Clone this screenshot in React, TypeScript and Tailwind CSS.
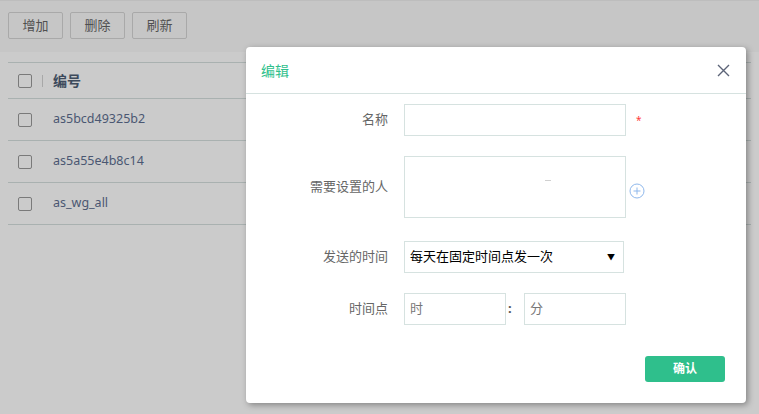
import React from 'react';

const rows = ['as5bcd49325b2', 'as5a55e4b8c14', 'as_wg_all'];

function Checkbox() {
  return <span className="block h-[14px] w-[14px] rounded-[2px] border border-[#7a7a7a]" />;
}

export default function App() {
  return (
    <div
      className="relative h-[414px] w-[759px] overflow-hidden bg-[#cbcbcb]"
      style={{ fontFamily: '"Noto Sans", "Noto Sans CJK SC", sans-serif' }}
    >
      <div className="flex h-[52px] gap-[7px] border-t border-[#bdbdbd] bg-[#c6c6c6] pl-2 pt-[11px]">
        {['增加', '删除', '刷新'].map((b) => (
          <button
            key={b}
            type="button"
            className="flex h-[27px] w-[55px] items-center justify-center rounded-[2px] border border-[#a9a9a9] text-[13px] text-[#505050]"
          >
            {b}
          </button>
        ))}
      </div>

      <div className="mx-2 mt-[10px] border-t border-[#a9b1b0]">
        <div className="flex h-[36px] items-center border-b border-[#a9b1b0] pl-[10px]">
          <Checkbox />
          <span className="ml-[10px] h-[12px] w-px bg-[#a8a8a8]" />
          <span className="ml-[10px] text-[14px] font-bold text-[#3d4a5c]">编号</span>
        </div>
        {rows.map((r) => (
          <div key={r} className="flex h-[42px] items-center border-b border-[#a9b1b0] pl-[10px]">
            <Checkbox />
            <span className="ml-[21px] text-[12.5px] text-[#4a5772]">{r}</span>
          </div>
        ))}
      </div>

      <div className="absolute left-[246px] top-[47px] flex h-[356px] w-[500px] flex-col rounded-[4px] bg-white shadow-[2px_2px_6px_rgba(0,0,0,0.35)]">
        <div className="flex h-[47px] items-center justify-between border-b border-[#d6e2e0] pl-[15px] pr-[16px]">
          <span className="text-[14px] text-[#2fbf8c]">编辑</span>
          <svg width="13" height="13" viewBox="0 0 13 13" className="text-[#5c6478]">
            <path d="M1 1L12 12M12 1L1 12" stroke="currentColor" strokeWidth="1.4" />
          </svg>
        </div>

        <div className="flex flex-col pt-[10px] text-[13px]">
          <div className="flex items-center">
            <label className="w-[142px] text-right text-[#666]">名称</label>
            <input className="ml-4 h-[32px] w-[222px] border border-[#d6e2e0] outline-none" />
            <span className="ml-[10px] text-[10px] text-[#ff3b3b]">*</span>
          </div>

          <div className="mt-[20px] flex items-center">
            <label className="w-[142px] text-right text-[#666]">需要设置的人</label>
            <div className="relative ml-4 h-[62px] w-[222px] border border-[#d6e2e0]">
              <span className="absolute left-[140px] top-[23px] h-px w-[6px] bg-[#d0d0d0]" />
            </div>
            <svg width="16" height="16" viewBox="0 0 16 16" className="ml-[3px] mt-[7px] text-[#8fb8ec]">
              <circle cx="8" cy="8" r="7" fill="none" stroke="currentColor" strokeWidth="1" />
              <path d="M8 4.5v7M4.5 8h7" stroke="currentColor" strokeWidth="1" />
            </svg>
          </div>

          <div className="mt-[23px] flex items-center">
            <label className="w-[142px] text-right text-[#666]">发送的时间</label>
            <div className="ml-4 flex h-[32px] w-[220px] items-center justify-between border border-[#d6e2e0] pl-[5px] pr-[8px] text-black">
              <span>每天在固定时间点发一次</span>
              <span className="text-[8px]">▼</span>
            </div>
          </div>

          <div className="mt-[20px] flex items-center">
            <label className="w-[142px] text-right text-[#666]">时间点</label>
            <div className="ml-4 flex h-[32px] w-[102px] items-center border border-[#d6e2e0] pl-[5px] text-[#777]">时</div>
            <span className="w-[18px] pl-[2px] font-bold text-[#555]">:</span>
            <div className="flex h-[32px] w-[102px] items-center border border-[#d6e2e0] pl-[5px] text-[#777]">分</div>
          </div>
        </div>

        <div className="mt-auto flex justify-end pb-[21px] pr-[21px]">
          <button
            type="button"
            className="flex h-[26px] w-[80px] items-center justify-center rounded-[3px] bg-[#2fbf8c] text-[12px] font-bold text-white"
          >
            确认
          </button>
        </div>
      </div>
    </div>
  );
}
